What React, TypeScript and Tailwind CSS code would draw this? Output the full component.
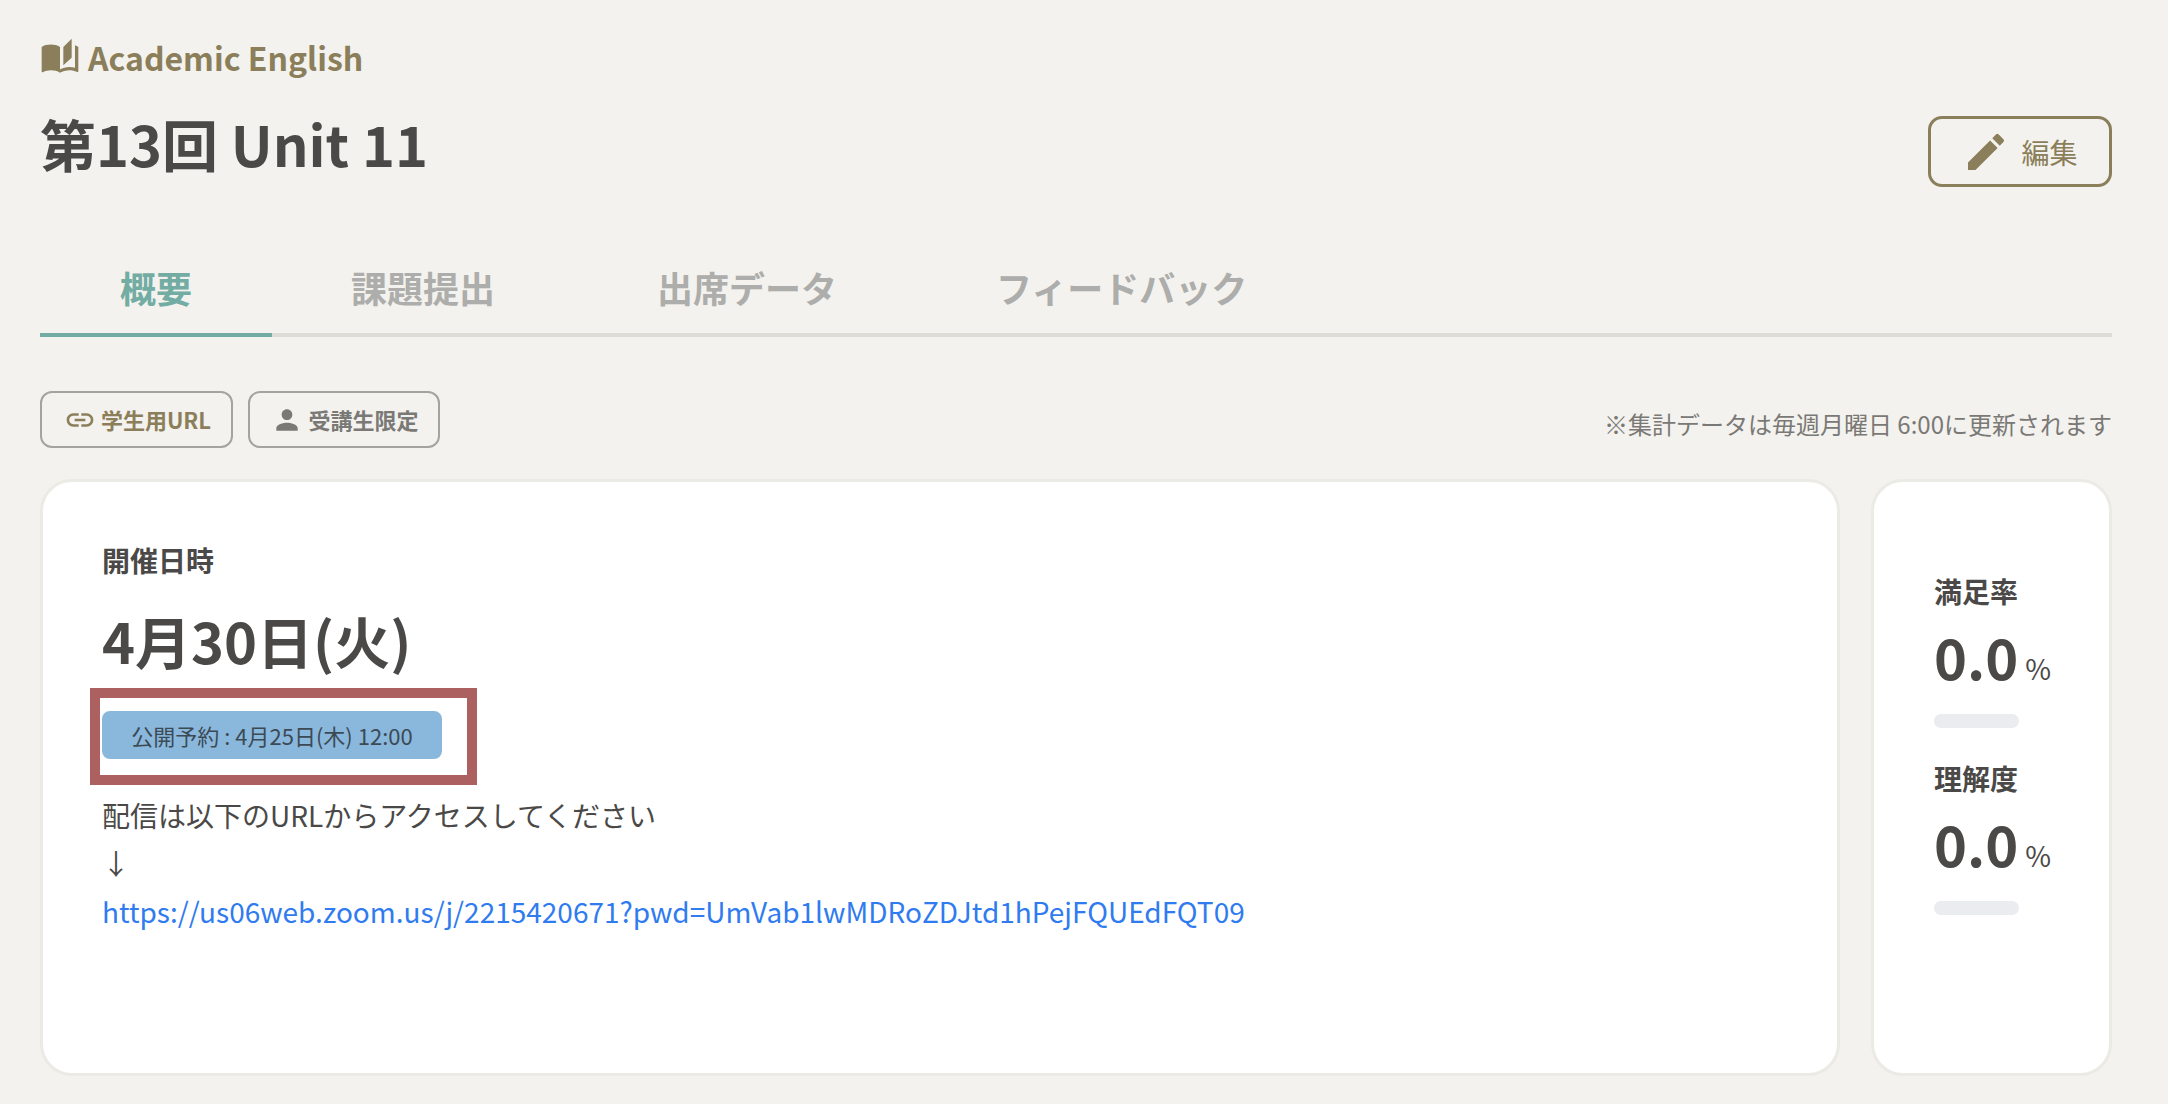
import { MdAutoStories, MdEdit, MdLink, MdPerson } from "react-icons/md";

const stats = [
  { label: "満足率", value: "0.0" },
  { label: "理解度", value: "0.0" },
];

export default function App() {
  return (
    <div className="w-[2168px] h-[1104px] overflow-hidden bg-[#f3f2ee] pl-10 pr-14 pt-[33px] text-[#4a4947] font-['Noto_Sans_CJK_JP','Noto_Sans',sans-serif]">
      {/* Header */}
      <div className="flex items-center gap-2 h-12 text-[#8b7e5a]">
        <MdAutoStories className="w-10 h-10" />
        <span className="text-[32px] font-bold leading-none">Academic English</span>
      </div>
      <div className="flex justify-between items-start mt-5">
        <h1 className="text-[56px] font-bold leading-[84px]">第13回 Unit 11</h1>
        <button className="flex items-center justify-center gap-[11px] w-[184px] h-[71px] mt-[15px] rounded-[14px] border-[3px] border-[#8b7e5a] text-[#8b7e5a] text-[28px]">
          <MdEdit className="w-12 h-12" />
          編集
        </button>
      </div>

      {/* Tabs */}
      <div className="flex mt-[50px] border-b-4 border-[#dddcd6] h-[100px]">
        <div className="px-20 h-[100px] border-b-4 border-[#72aca3] text-[#72aca3] text-[36px] font-bold leading-[100px]">概要</div>
        <div className="px-20 -ml-px text-[#adadab] text-[36px] font-bold leading-[100px]">課題提出</div>
        <div className="px-20 ml-[2px] text-[#adadab] text-[36px] font-bold leading-[100px]">出席データ</div>
        <div className="px-20 -ml-px text-[#adadab] text-[36px] font-bold leading-[100px]">フィードバック</div>
      </div>

      {/* Pills and note */}
      <div className="flex justify-between items-end mt-[54px]">
        <div className="flex gap-[15px]">
          <div className="flex items-center justify-center gap-[5px] pl-[2px] w-[193px] h-[57px] rounded-xl border-2 border-[#a5a39d] text-[#8b7e5a] text-[22px] font-bold">
            <MdLink className="w-8 h-8" />
            学生用URL
          </div>
          <div className="flex items-center justify-center gap-[5px] pl-[2px] w-[192px] h-[57px] rounded-xl border-2 border-[#a5a39d] text-[#7a7976] text-[22px] font-bold">
            <MdPerson className="w-8 h-8" />
            受講生限定
          </div>
        </div>
        <p className="text-[24px] leading-9 mb-[6px] text-[#7a7976]">※集計データは毎週月曜日 6:00に更新されます</p>
      </div>

      {/* Cards */}
      <div className="flex gap-[31px] mt-[31px] h-[597px]">
        <div className="flex-1 bg-white rounded-[32px] border-[3px] border-[#ebeae5] pl-[59px] pt-[58px]">
          <p className="text-[28px] font-bold leading-10">開催日時</p>
          <p className="text-[56px] font-bold leading-[90px] mt-[15px]">4月30日(火)</p>
          <div className="relative w-[340px] h-12 mt-[26px]">
            <div className="w-full h-full rounded-lg bg-[#8ab8dd] text-[#3c4a55] text-[22px] flex items-center justify-center">公開予約 : 4月25日(木) 12:00</div>
            <div className="absolute -left-3 -right-[35px] -top-[23px] -bottom-[26px] border-[10px] border-[#ad6060]" />
          </div>
          <div className="mt-8 text-[28px] leading-12">
            <p>配信は以下のURLからアクセスしてください</p>
            <p>↓</p>
            <a className="text-[#2f7bef]">https://us06web.zoom.us/j/2215420671?pwd=UmVab1lwMDRoZDJtd1hPejFQUEdFQT09</a>
          </div>
        </div>
        <div className="w-[241px] bg-white rounded-[32px] border-[3px] border-[#ebeae5] pl-[60px] pt-[89px]">
          {stats.map((s) => (
            <div key={s.label} className="h-[187px]">
              <p className="text-[28px] font-bold leading-10">{s.label}</p>
              <p className="flex items-baseline gap-[7px] mt-[3px] leading-[84px]">
                <span className="text-[56px] font-bold">{s.value}</span>
                <span className="text-[28px]">%</span>
              </p>
              <div className="w-[85px] h-[14px] mt-1 rounded-full bg-[#ebecf0]" />
            </div>
          ))}
        </div>
      </div>
    </div>
  );
}
